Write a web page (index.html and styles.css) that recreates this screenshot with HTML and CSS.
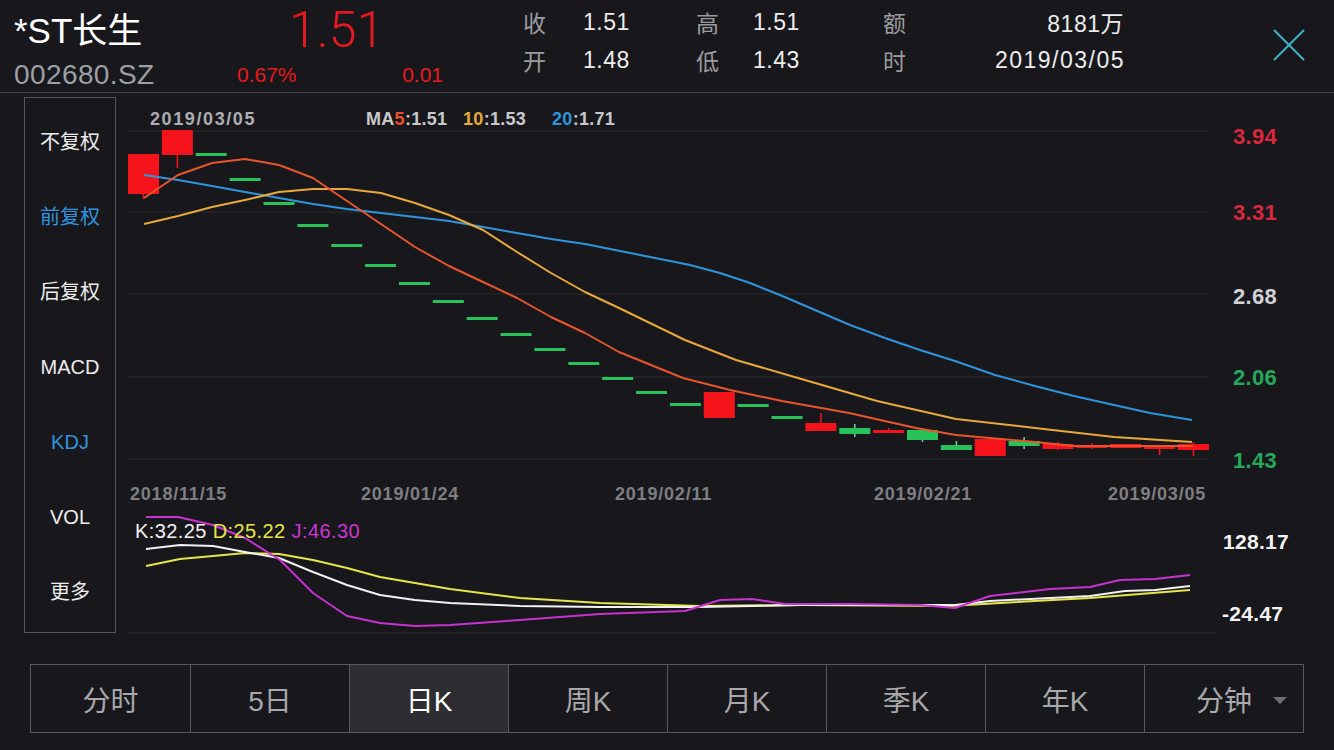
FILE: index.html
```html
<!DOCTYPE html>
<html>
<head>
    <meta charset="UTF-8">
    <meta name="viewport" content="width=device-width, initial-scale=1.0">
    <title>*ST长生 日K</title>
    <link rel="stylesheet" href="styles.css">
</head>
<body>
    <div class="header">
        <div class="ident">
            <div class="name">*ST长生</div>
            <div class="code">002680.SZ</div>
        </div>
        <div class="price">
            <div class="last">1.51</div>
            <div class="change"><span>0.67%</span><span>0.01</span></div>
        </div>
        <div class="stats">
            <span class="lbl">收</span><span class="val">1.51</span>
            <span class="lbl">高</span><span class="val">1.51</span>
            <span class="lbl">额</span><span class="val right">8181万</span>
            <span class="lbl">开</span><span class="val">1.48</span>
            <span class="lbl">低</span><span class="val">1.43</span>
            <span class="lbl">时</span><span class="val right date">2019/03/05</span>
        </div>
        <button type="button" class="close" aria-label="关闭">
            <svg width="32" height="32" viewBox="0 0 32 32"><path d="M1 1L31 31M31 1L1 31"/></svg>
        </button>
    </div>

    <div class="main">
        <ul class="side">
            <li>不复权</li>
            <li class="on">前复权</li>
            <li>后复权</li>
            <li>MACD</li>
            <li class="on">KDJ</li>
            <li>VOL</li>
            <li>更多</li>
        </ul>

        <svg id="chart" class="chart" viewBox="118 93 1216 571">
            <g class="grid">
                <line x1="128" x2="1208" y1="131" y2="131"/>
                <line x1="128" x2="1208" y1="212" y2="212"/>
                <line x1="128" x2="1208" y1="294" y2="294"/>
                <line x1="128" x2="1208" y1="377" y2="377"/>
                <line x1="128" x2="1208" y1="459" y2="459"/>
                <line x1="128" x2="1215" y1="633" y2="633"/>
            </g>
            <g class="legend">
                <text x="150" y="125" class="date">2019/03/05</text>
                <text x="366" y="125">MA<tspan class="c5">5</tspan>:1.51</text>
                <text x="463" y="125"><tspan class="c10">10</tspan>:1.53</text>
                <text x="552" y="125"><tspan class="c20">20</tspan>:1.71</text>
            </g>
            <g class="axis">
                <text x="1233" y="144" class="ax-up">3.94</text>
                <text x="1233" y="220" class="ax-up">3.31</text>
                <text x="1233" y="304" class="ax-mid">2.68</text>
                <text x="1233" y="385" class="ax-down">2.06</text>
                <text x="1233" y="468" class="ax-down">1.43</text>
                <text x="1223" y="549" class="ax-kdj">128.17</text>
                <text x="1222" y="621" class="ax-kdj">-24.47</text>
            </g>
            <g class="dates">
                <text x="130" y="500">2018/11/15</text>
                <text x="361" y="500">2019/01/24</text>
                <text x="615" y="500">2019/02/11</text>
                <text x="874" y="500">2019/02/21</text>
                <text x="1108" y="500">2019/03/05</text>
            </g>
            <g id="plot"></g>
            <text x="135" y="538" class="kdj-legend">K:32.25 <tspan class="t-d">D:25.22</tspan> <tspan class="t-j">J:46.30</tspan></text>
        </svg>
    </div>

    <div class="tabs">
        <div class="tab">分时</div>
        <div class="tab">5日</div>
        <div class="tab on">日K</div>
        <div class="tab">周K</div>
        <div class="tab">月K</div>
        <div class="tab">季K</div>
        <div class="tab">年K</div>
        <div class="tab more">分钟<span class="caret"></span></div>
    </div>

    <script>
        const NS = 'http://www.w3.org/2000/svg';
        const plot = document.getElementById('plot');

        function add(tag, attrs) {
            const el = document.createElementNS(NS, tag);
            for (const k in attrs) el.setAttribute(k, attrs[k]);
            plot.appendChild(el);
            return el;
        }

        // 实体上沿, 实体下沿, 是否上涨, 上影, 下影 (像素)
        const candles = [
            [154, 194, 1, 154, 199], [130, 155, 1, 130, 168], [153, 156, 0], [178, 181, 0],
            [202, 205, 0], [224, 227, 0], [244, 247, 0], [264, 267, 0],
            [282, 285, 0], [300, 303, 0], [317, 320, 0], [333, 336, 0],
            [348, 351, 0], [362, 365, 0], [377, 380, 0], [391, 394, 0],
            [403, 406, 0], [392, 418, 1], [404, 407, 0], [416, 419, 0],
            [423, 431, 1, 413, 431], [428, 434, 0, 424, 437], [430, 433, 1, 428, 433], [430, 440, 0, 428, 442],
            [445, 450, 0, 441, 450], [439, 456, 1], [441, 446, 0, 437, 449], [444, 449, 1, 442, 450],
            [445, 448, 1, 443, 449], [444, 448, 1], [445, 449, 1, 445, 455], [444, 450, 1, 442, 456]
        ];

        candles.forEach(function(c, i) {
            const x = 128 + i * 33.87;
            const cls = c[2] ? 'up' : 'down';
            const top = c[3] || c[0];
            const bottom = c[4] || c[1];
            if (top < c[0] || bottom > c[1]) {
                add('line', { x1: x + 15.5, x2: x + 15.5, y1: top, y2: bottom, class: 'wick ' + cls });
            }
            add('rect', { x: x, y: c[0], width: 31, height: c[1] - c[0], class: cls });
        });

        const lines = {
            ma20: '144,175 178,180 212,186 245,192 279,198 313,204 347,209 381,213 415,217 449,221 483,227 517,233 551,239 585,244 620,251 655,258 690,265 720,273 750,283 780,295 815,310 850,325 885,338 920,350 955,361 995,375 1035,386 1074,396 1114,405 1150,413 1192,420',
            ma10: '144,224 178,216 212,207 245,200 279,192 313,189 347,189 381,193 415,203 449,215 483,230 517,252 551,273 585,292 619,308 685,340 736,360 798,378 877,401 956,419 1035,428 1114,437 1192,442',
            ma5: '144,198 178,175 212,163 245,159 279,165 313,178 347,201 381,224 415,247 449,266 483,282 517,298 551,317 585,333 619,352 683,378 730,390 782,401 849,413 916,428 956,435 1035,442 1074,446 1193,446',
            kd: '146,566 180,559 213,556 245,553 279,554 313,560 347,568 380,577 415,583 450,589 520,598 600,603 700,606 800,605 950,606 1000,603 1090,598 1190,590',
            kk: '146,549 180,545 213,546 245,552 279,558 313,572 347,585 380,595 415,600 450,603 520,606 600,607 700,607 800,605 900,605 955,605 990,601 1050,598 1090,596 1125,591 1155,590 1190,586',
            kj: '146,517 178,517 213,525 245,538 280,560 313,593 347,616 380,623 415,626 450,625 520,620 600,614 685,611 720,600 752,599 785,604 850,604 920,605 955,608 990,596 1050,589 1090,587 1120,580 1155,579 1190,575'
        };

        for (const name in lines) {
            add('polyline', { points: lines[name], class: 'line ' + name });
        }
    </script>
</body>
</html>
```

FILE: styles.css
```css
body { margin: 0; width: 1334px; height: 750px; overflow: hidden; background: #18181c; color: #ececec; font-family: "Liberation Sans", "Noto Sans CJK SC", sans-serif; }

.header { display: flex; height: 93px; box-sizing: border-box; border-bottom: 1px solid #45454a; }
.ident { width: 223px; padding-left: 14px; }
.name { margin-top: 11px; font-size: 35px; line-height: 40px; color: #fff; }
.code { margin-top: 8px; font-size: 28px; line-height: 32px; color: #9c9fa5; letter-spacing: 0.4px; }
.price { width: 206px; color: #e8191e; }
.last { margin-top: 5px; padding-left: 52px; font-family: Roboto, "Liberation Sans", sans-serif; font-weight: 300; font-size: 50px; line-height: 50px; }
.change { display: flex; justify-content: space-between; margin-top: 8px; font-size: 21px; line-height: 24px; }
.stats { display: grid; grid-template-columns: 60px 113px 57px 130px 40px 201px; grid-auto-rows: 38px; align-items: center; margin-left: 80px; padding-top: 3px; font-size: 23px; }
.stats .lbl { color: #9b9b9f; }
.stats .val { color: #ededed; letter-spacing: 0.5px; }
.stats .right { text-align: right; }
.stats .date { letter-spacing: 1.5px; margin-right: -1px; }
.close { margin: 29px 29px 0 auto; width: 32px; height: 32px; padding: 0; border: none; background: none; cursor: pointer; }
.close svg { display: block; }
.close path { stroke: #3fb3ca; stroke-width: 2; fill: none; }

.main { display: flex; height: 571px; }
.side { width: 92px; height: 536px; box-sizing: border-box; margin: 4px 0 0 24px; padding: 7px 0 0; list-style: none; border: 1px solid #56565b; }
.side li { height: 75px; line-height: 75px; text-align: center; font-size: 20px; color: #ececec; }
.side .on { color: #2f94df; }
.chart { display: block; width: 1216px; height: 571px; margin-left: 2px; }

.grid line { stroke: #2b2b30; stroke-width: 1; }
.legend text { font-size: 18px; font-weight: bold; fill: #c8c8cc; letter-spacing: 0.3px; }
.legend .date { fill: #aeaeb2; letter-spacing: 1.6px; }
.legend .c5 { fill: #e8502c; }
.legend .c10 { fill: #e4a93a; }
.legend .c20 { fill: #2e95dc; }
.axis text { font-size: 22px; font-weight: bold; letter-spacing: 0.3px; }
.axis .ax-up { fill: #d8283e; }
.axis .ax-mid { fill: #d2d2d6; }
.axis .ax-down { fill: #25a85a; }
.axis .ax-kdj { font-size: 21px; fill: #f2f2f2; }
.dates text { font-size: 18px; font-weight: bold; fill: #7e7e83; letter-spacing: 0.8px; }
.kdj-legend { font-size: 20px; fill: #f2f2f2; letter-spacing: 0.4px; }
.kdj-legend .t-d { fill: #e6e64a; }
.kdj-legend .t-j { fill: #cc35d4; }

rect.up { fill: #f5131b; }
rect.down { fill: #27c25a; }
.wick { stroke-width: 1.5; }
.wick.up { stroke: #f5131b; }
.wick.down { stroke: #6fd690; }
.line { fill: none; stroke-width: 2; stroke-linejoin: round; }
.ma5 { stroke: #e8552c; }
.ma10 { stroke: #e9a93a; }
.ma20 { stroke: #2e95dc; }
.kk { stroke: #f2f2f2; }
.kd { stroke: #e6e64a; }
.kj { stroke: #c832d0; }

.tabs { display: grid; grid-template-columns: repeat(8, 1fr); height: 69px; margin: 0 30px; box-sizing: border-box; border: 1px solid #58585d; }
.tab { position: relative; display: flex; align-items: center; justify-content: center; border-left: 1px solid #58585d; font-size: 28px; color: #a8a8ad; }
.tab:first-child { border-left: none; }
.tab.on { background: #2d2d32; color: #fff; }
.caret { position: absolute; right: 16px; top: 32px; border-left: 7px solid transparent; border-right: 7px solid transparent; border-top: 7px solid #6e6e73; }
```
